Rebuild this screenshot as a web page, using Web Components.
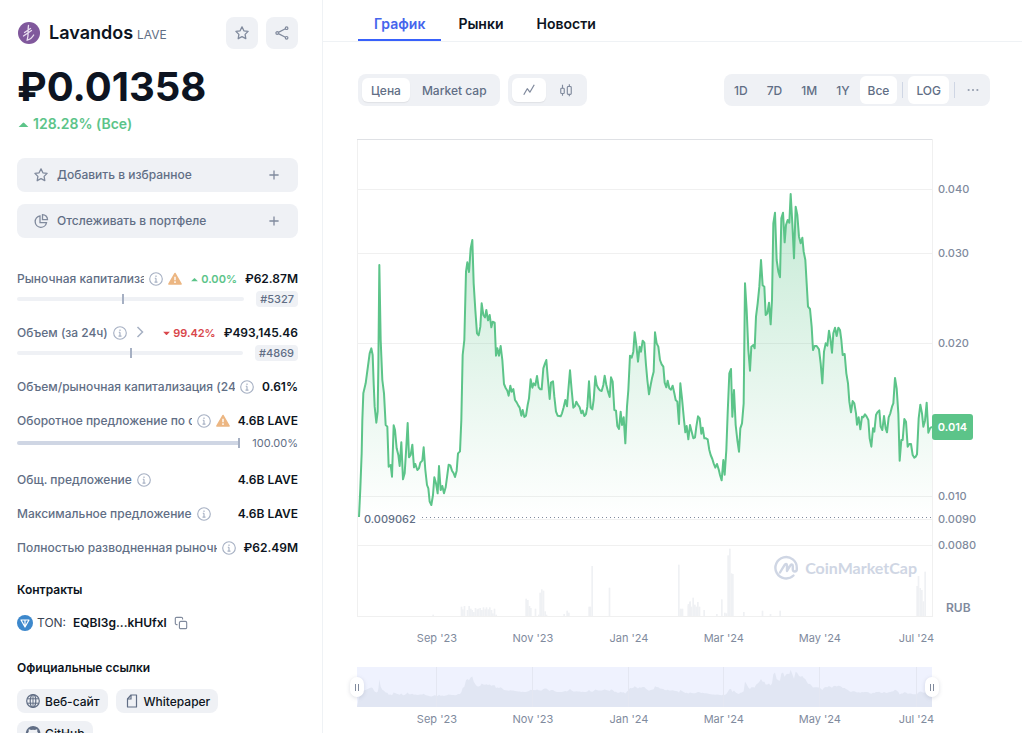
<!DOCTYPE html>
<html lang="ru">
<head>
<meta charset="utf-8">
<title>Lavandos LAVE</title>
<style>
html, body { margin: 0; height: 100%; }
body {
  font-family: Inter, "Liberation Sans", sans-serif;
  color: #0d1421;
  background: #fff;
  --muted: #616e85;
  --faint: #a6b0c3;
  --soft: #eff2f5;
  --fill: #eff1f5;
  --green: #5cc489;
  --red: #d9474b;
}
</style>
</head>
<body>
<coin-page>
  <coin-sidebar slot="side">
    <coin-header slot="top" name="Lavandos" symbol="LAVE" price="₽0.01358" change="128.28% (Все)"></coin-header>
    <action-button slot="actions" icon="star">Добавить в избранное</action-button>
    <action-button slot="actions" icon="pie">Отслеживать в портфеле</action-button>

    <stat-row slot="stats" label="Рыночная капитализация" warn delta="0.00%" dir="up" value="₽62.87M" rank="#5327" at="46"></stat-row>
    <stat-row slot="stats" label="Объем (за 24ч)" more delta="99.42%" dir="down" value="₽493,145.46" rank="#4869" at="50"></stat-row>
    <stat-row slot="stats" label="Объем/рыночная капитализация (24ч)" value="0.61%"></stat-row>
    <stat-row slot="stats" label="Оборотное предложение по словам проекта" warn value="4.6B LAVE" share="100.00%" at="99"></stat-row>
    <stat-row slot="stats" label="Общ. предложение" value="4.6B LAVE"></stat-row>
    <stat-row slot="stats" label="Максимальное предложение" value="4.6B LAVE"></stat-row>
    <stat-row slot="stats" label="Полностью разводненная рыночная капитализация" value="₽62.49M"></stat-row>

    <contract-line slot="contracts" chain="TON:" address="EQBI3g...kHUfxl"></contract-line>
    <link-chip slot="links" icon="globe" href="#site">Веб-сайт</link-chip>
    <link-chip slot="links" icon="doc" href="#paper">Whitepaper</link-chip>
    <link-chip slot="links" icon="github" href="#github">GitHub</link-chip>
  </coin-sidebar>
  <page-tabs slot="main"></page-tabs>
  <chart-toolbar slot="main"></chart-toolbar>
  <price-chart slot="main"></price-chart>
  <range-brush slot="main"></range-brush>
</coin-page>

<script>
const ICONS = {
  star: '<path d="M8 1.9l1.9 3.9 4.2.6-3 3 .7 4.3L8 11.7l-3.800 2 .7-4.300-3-3 4.200-.6z" stroke-linejoin="round"/>',
  share: '<circle cx="3.200" cy="8" r="1.300"/><circle cx="12.600" cy="3.200" r="1.300"/><circle cx="12.600" cy="12.800" r="1.300"/><path d="M4.400 7.400l7-3.600M4.400 8.600l7 3.600"/>',
  pie: '<path d="M7 3a5.700 5.700 0 1 0 6.500 6.600H7z"/><path d="M9.500 1.600v5h5a5 5 0 0 0-5-5z"/>',
  plus: '<path d="M8 3.400v9.200M3.400 8h9.200"/>',
  info: '<circle cx="8" cy="8" r="7.200"/><path d="M8 7v4.500M8 4v1.800M6.600 7.200H8M6.300 11.500h3.400"/>',
  warn: '<path d="M8 1.800L14.800 13.600H1.200z" fill="#ecb682" stroke="#ecb682" stroke-width="2" stroke-linejoin="round"/><path d="M8 5.500v4M8 10.700v1.800" stroke="#fff" stroke-width="1.600"/>',
  chevron: '<path d="M5.500 2l5 5-5 5"/>',
  copy: '<rect x="6.200" y="6.200" width="8.300" height="8.300" rx="1.500"/><path d="M4 9.800H3a1.500 1.500 0 0 1-1.500-1.500V3A1.500 1.500 0 0 1 3 1.500h5.300A1.500 1.500 0 0 1 9.800 3v1"/>',
  globe: '<circle cx="8" cy="8" r="6.300"/><ellipse cx="8" cy="8" rx="2.800" ry="6.300"/><path d="M8 1.700v12.600M2.200 5.800h11.600M2.200 10.200h11.600" stroke-width="1"/>',
  doc: '<path d="M7 2h5.500v12h-9V6z" stroke-linejoin="round"/><path d="M7 2v4H3.500"/>',
  github: '<path fill="currentColor" stroke="none" d="M8 .9a7.200 7.200 0 0 0-2.300 14v-2.300c-2 .4-2.400-.8-2.400-.8-.4-1-1-1.200-1-1.200 1.200.1 1.600 1 1.600 1 .7 1.100 1.700.8 2.100.6-1.900-.3-3-1.200-3-3.700 0-.9.300-1.600.8-2.100-.2-.8-.2-1.500.1-2.200.7 0 1.400.3 2.100.9a7 7 0 0 1 4 0c.7-.6 1.400-.9 2.100-.9.300.7.300 1.400.1 2.200.5.500.8 1.200.8 2.100 0 2.500-1.100 3.400-3 3.700.3.300.5.800.5 1.500v1.200A7.200 7.200 0 0 0 8 .9z"/>',
  line: '<path d="M2 13.500L6 6.500l3 4 5-8.500" stroke-linejoin="round"/>',
  candle: '<rect x="2" y="6" width="4" height="6" rx="1"/><path d="M4 2v4M4 12v2.500"/><rect x="9.500" y="4" width="4.500" height="9" rx="1"/><path d="M11.800 1.500V4M11.800 13v2"/>',
  dots: '<path d="M2 8h2M7 8h2M12 8h2" stroke-width="1.800"/>',
  up: '<path fill="currentColor" stroke="none" d="M2 11l5-5q1-1 2 0l5 5z"/>',
  down: '<path fill="currentColor" stroke="none" d="M2 5l5 5q1 1 2 0l5-5z"/>'
};
const icon = (name, size = 16, w = 1.4) =>
  `<svg class="i" width="${size}" height="${size}" viewBox="0 0 16 16" fill="none" stroke="currentColor" stroke-width="${w}" aria-hidden="true">${ICONS[name]}</svg>`;

const BASE = `
  *{box-sizing:border-box}
  .i{display:block;flex:none}
  button{font:inherit;color:inherit;border:0;background:none;padding:0;margin:0;cursor:pointer}
  a{color:inherit;text-decoration:none}
  h1,h2,p{margin:0}
`;
function define(name, css, html) {
  customElements.define(name, class extends HTMLElement {
    constructor() { super(); this.attachShadow({ mode: 'open' }); }
    connectedCallback() {
      this.shadowRoot.innerHTML = `<style>${BASE}${css}</style>` + html(this);
    }
  });
}
const attr = (el, n) => el.getAttribute(n) || '';

define('coin-page', `
  :host{display:flex;height:100vh;overflow:hidden}
  aside{flex:0 0 323px;border-right:1px solid var(--soft);overflow-y:auto;scrollbar-width:none}
  main{flex:1;min-width:0;overflow-y:auto;scrollbar-width:none}
`, () => `<aside><slot name="side"></slot></aside><main><slot name="main"></slot></main>`);

define('coin-sidebar', `
  :host{display:block;padding:17px 24px 24px 17px}
  .actions{display:grid;gap:12px;margin-top:24px}
  .stats{display:block;margin-top:32px}
  h2{font-size:12px;line-height:18px;font-weight:600}
  .contracts{margin-top:24px}
  .links{margin-top:27px}
  .chips{display:flex;flex-wrap:wrap;gap:8px;margin-top:12px}
`, () => `
  <slot name="top"></slot>
  <div class="actions"><slot name="actions"></slot></div>
  <div class="stats"><slot name="stats"></slot></div>
  <section class="contracts"><h2>Контракты</h2><slot name="contracts"></slot></section>
  <section class="links"><h2>Официальные ссылки</h2><div class="chips"><slot name="links"></slot></div></section>`);

define('coin-header', `
  :host{display:block}
  .top{display:flex;align-items:center;height:32px}
  .logo{width:24px;height:24px;margin-right:8px;flex:none}
  h1{font-size:18px;line-height:24px;font-weight:600;display:flex;align-items:baseline;gap:4px;flex:1;padding-top:2px}
  h1 span{font-size:12px;font-weight:400;color:var(--muted)}
  .top button{width:32px;height:32px;border-radius:8px;background:var(--fill);color:#808a9d;display:grid;place-items:center;margin-left:8px}
  .price{font-size:40px;line-height:48px;font-weight:700;margin-top:14px}
  .change{display:flex;align-items:center;gap:3px;height:20px;margin-top:3px;font-size:14px;line-height:20px;font-weight:600;color:var(--green)}
`, el => `
  <div class="top">
    <svg class="logo" viewBox="0 0 24 24" aria-hidden="true"><circle cx="12" cy="12" r="11" fill="#80589c"/><path d="M11.500 4.500c-1 5 .5 9-1.300 14.500 3-.5 5-2.500 6.500-5M7.500 11.500l6-4M6.500 15l8-5.500" fill="none" stroke="#eadff0" stroke-width="1.300" stroke-linecap="round"/></svg>
    <h1>${attr(el, 'name')}<span>${attr(el, 'symbol')}</span></h1>
    <button aria-label="В избранное">${icon('star', 16, 1.3)}</button>
    <button aria-label="Поделиться">${icon('share', 16, 1.2)}</button>
  </div>
  <p class="price">${attr(el, 'price')}</p>
  <p class="change">${icon('up', 13)}<span>${attr(el, 'change')}</span></p>`);

define('action-button', `
  :host{display:block}
  button{display:flex;align-items:center;gap:8px;width:100%;height:34px;padding:0 16px;border-radius:8px;background:var(--fill);color:var(--muted);font-size:12px;line-height:18px;font-weight:500}
  span{flex:1;text-align:left}
  .i{color:#808a9d}
`, el => `<button>${icon(attr(el, 'icon'), 16, 1.3)}<span><slot></slot></span>${icon('plus', 16, 1.3)}</button>`);

define('stat-row', `
  :host{display:block;margin-bottom:16px}
  .row{display:flex;align-items:center;height:18px;font-size:12px;line-height:18px}
  .label{overflow:hidden;white-space:nowrap;color:var(--muted);font-weight:500;flex:0 1 auto}
  .row .i{margin-left:5px}
  .info{color:var(--faint)} .more{color:var(--faint)}
  .end{display:flex;align-items:center;margin-left:auto;padding-left:8px;white-space:nowrap;font-weight:600}
  .delta{display:flex;align-items:center;gap:2px;font-size:11px;margin-right:8px}
  .delta.up{color:var(--green)} .delta.down{color:var(--red)}
  .row .delta .i{margin:0}
  .bar{display:flex;align-items:center;justify-content:space-between;gap:12px;height:18px;margin-top:2px;font-size:11px;line-height:16px;color:var(--muted)}
  .bar.share{height:20px;margin:3px 0 18px}
  .track{position:relative;flex:1;height:4px;border-radius:2px;background:var(--fill)}
  .share .track{background:#cfd6e4}
  .mark{position:absolute;top:-3px;width:2px;height:10px;background:#a6b0c3}
  .rank{padding:0 4px;border-radius:4px;background:var(--fill);font-weight:500}
`, el => {
  const d = attr(el, 'dir'), has = n => el.hasAttribute(n);
  const tail = has('rank') ? `<span class="rank">${attr(el, 'rank')}</span>` : `<span>${attr(el, 'share')}</span>`;
  return `<div class="row"><span class="label">${attr(el, 'label')}</span>
    <span class="info">${icon('info', 14, 1.3)}</span>${has('warn') ? icon('warn', 14) : ''}${has('more') ? `<span class="more">${icon('chevron', 16, 1.5)}</span>` : ''}
    <span class="end">${has('delta') ? `<span class="delta ${d}">${icon(d, 9)}${attr(el, 'delta')}</span>` : ''}<span>${attr(el, 'value')}</span></span></div>` +
    (has('at') ? `<div class="bar${has('share') ? ' share' : ''}"><div class="track"><i class="mark" style="left:${attr(el, 'at')}%"></i></div>${tail}</div>` : '');
});

define('contract-line', `
  :host{display:flex;align-items:center;margin-top:15px;height:18px;font-size:12px;line-height:18px}
  .coin{width:16px;height:16px;margin-right:4px}
  span{color:#3a4354}
  a{font-weight:600;margin:0 7px}
  button{color:#808a9d}
`, el => `
  <svg class="coin" viewBox="0 0 16 16" aria-hidden="true"><circle cx="8" cy="8" r="8" fill="#3d88cc"/><path d="M4 5h8L8 12zM8 5v7" fill="none" stroke="#fff" stroke-width="1.200" stroke-linejoin="round"/></svg>
  <span>${attr(el, 'chain')}</span><a href="#contract">${attr(el, 'address')}</a>
  <button aria-label="Копировать">${icon('copy', 14, 1.3)}</button>`);

define('link-chip', `
  :host{display:block}
  a{display:flex;align-items:center;gap:4px;height:24px;padding:0 8px;border-radius:8px;background:var(--fill);font-size:12px;font-weight:500}
  .i{color:var(--muted)}
`, el => `<a href="${attr(el, 'href')}">${icon(attr(el, 'icon'), 16, 1.2)}<slot></slot></a>`);

define('page-tabs', `
  :host{display:block;border-bottom:1px solid var(--soft)}
  nav{display:flex;gap:1px;height:41px;padding-left:35px}
  a{padding:0 16px;line-height:48px;font-size:14px;font-weight:600}
  a[aria-current]{color:#4565ec;border-bottom:2px solid #3861fb}
`, () => `<nav><a href="#chart" aria-current="page">График</a><a href="#markets">Рынки</a><a href="#news">Новости</a></nav>`);

define('chart-toolbar', `
  :host{display:flex;gap:8px;margin:32px 32px 0 35px;font-size:12px;font-weight:500;color:var(--muted)}
  .group{display:flex;align-items:center;height:32px;padding:0 4px;border-radius:8px;background:var(--fill)}
  button{height:24px;padding:0 9px;border-radius:6px}
  .wide{padding:0 9px 0 12px}
  .views{gap:3px}
  .pic{width:34px;padding:0;display:grid;place-items:center;color:#808a9d}
  .on{background:#fff;box-shadow:0 1px 1px #80808022}
  .tall{height:28px;box-shadow:none;padding:0 8px}
  .ranges{margin-left:auto;gap:1px;padding:0 4px 0 1px}
  .ranges .pic{width:26px}
  i{width:1px;height:16px;background:#cfd6e4;margin:0 4px}
`, () => `
  <div class="group"><button class="on">Цена</button><button class="wide">Market cap</button></div>
  <div class="group views"><button class="pic on" aria-label="Линия">${icon('line', 14, 1.4)}</button><button class="pic" aria-label="Свечи">${icon('candle', 14, 1.3)}</button></div>
  <div class="group ranges"><button>1D</button><button>7D</button><button>1M</button><button>1Y</button><button class="on tall">Все</button><i></i><button class="on tall">LOG</button><i></i><button class="pic" aria-label="Ещё">${icon('dots', 14)}</button></div>`);

/* Series in thirds of a pixel on a 1725 × 1434 canvas; each part carries its own origin. */
const W = 1725, H = 1434;
const PARTS = [
  [-21, 303, `27,831 31,745 35,640 37,540 40,460 47,430 53,385 59,340 64,325 68,345 71,430 74,500 79,548 83,515 85,380 88,75 92,300 97,420 102,460 107,555 112,560 116,680 122,675 126,710 131,556 135,570 140,625 145,645 149,678 154,607 159,718 164,700 169,620 173,549 177,652 182,645 187,614 192,682 196,672 202,690 207,685 211,668 217,662 221,622 226,690 231,735 235,745 239,785 244,795 249,765 253,712 258,730 263,760 267,678 272,750 277,738 282,760 287,742 291,712 296,674 301,676 306,692 311,700 315,711 320,692 324,640 330,634 334,540 338,345 343,300 348,95 352,67 357,96 362,25 367,0 371,130 376,210 381,280 386,286 391,260 395,190 400,225 405,232 409,210 414,241 419,225 424,262 428,245 434,248 438,347 442,325 447,347 452,318 457,360 462,432 467,444 472,452 476,467 481,437 485,455 490,447 495,480 500,487 505,497 509,503 514,527 518,510 523,531 528,527 533,495 537,475 542,418 547,443 551,430 556,436 561,408 566,442 571,448 575,448 580,385 585,370`],
  [549, 513, `19,150 23,200 29,267 33,218 39,214 43,260 48,305 53,317 62,319 66,310 71,292 76,270 81,289 85,240 90,181 95,240 100,293 105,288 109,275 114,284 119,292 124,310 128,302 133,318 138,312 142,290 147,214 152,293 157,298 161,270 166,199 170,225 175,235 180,241 185,243 190,225 194,197 199,225 204,245 209,261 213,202 218,215 223,300 228,302 232,348 237,357 242,305 246,345 251,322 256,400 261,290 265,240 270,137 275,143 280,125 284,67 289,105 294,155 299,110 303,125 308,92 313,98 318,165 322,210 327,253 332,225 336,205 341,185 345,67 350,100 355,110 360,150 365,163 370,170 374,218 379,232 383,212 388,235 393,239 398,227 403,250 407,270 412,275 417,342 421,220 426,265 432,330 436,367 440,348 445,388 450,345 455,365 460,385 465,382 469,350 474,319 479,325 484,371 488,353 493,385 498,385 503,388 508,420 512,435 517,447 521,460 526,473 531,462 536,478 540,495 545,511 550,450 554,494 559,420 563,310 568,190 573,177 577,320 582,240 587,345 592,390 597,425`],
  [1089, 123, `61,745 66,730 71,670 75,310 80,390 85,510 90,572 94,500 100,495 104,505 108,410 113,370 118,320 123,240 128,316 133,320 137,405 142,400 147,368 152,433 156,360 160,130 165,98 170,240 175,275 180,292 184,115 189,98 194,187 198,135 203,120 208,128 212,42 217,130 222,235 227,80 232,105 237,170 242,190 247,173 251,215 256,240 260,310 264,380 270,387 275,440 279,510 284,498 290,498 297,508 302,550 307,610 312,515 317,490 322,497 327,452 331,475 336,518 340,460 345,443 350,468 355,443 360,450 364,480 368,525 374,522 379,580 384,610 388,665 393,697 398,663 403,670 408,700 411,734 416,712 421,748 426,710 430,712 435,703 440,710 445,720 449,775 454,800 459,745 463,755 468,705 472,697 478,691 482,740 487,750 492,708 497,745 501,757 506,712 511,700 516,680 520,670 525,594 530,625 535,700 539,842 544,780 548,780 553,717 558,725 563,800 568,792 573,792 578,825 583,833 587,830 591,823 596,715 601,674 606,700 610,740 615,722 620,668 625,758 630,745 636,740`]
];
const POINTS = PARTS.flatMap(([dx, dy, s]) => s.split(' ').map(p => {
  const [x, y] = p.split(',').map(Number);
  return [x + dx, y + dy];
}));
const VOLUME = [
  [-21, '249:4 334:28 338:20 343:30 352:18 357:30 362:22 366:18 371:12 376:24 381:20 385:22 390:24 395:18 400:26 405:20 409:26 414:20 419:26 424:18 428:8 433:22 438:4 528:52 533:48 538:30 542:24 556:22 566:4 570:70 575:80 580:76 585:14 589:4 642:6 651:16 656:10 717:28 721:28 726:150 778:85 986:154 991:20 996:20 1015:32 1019:42'],
  [969, '2:22 7:22 25:36 30:44 34:28 39:55 44:34 48:28 53:42 58:28 72:18 110:6 125:50 134:10 139:8 144:182 149:202 154:128 158:126 191:12 247:16 271:6 300:16 711:90 715:120 720:84 725:78 730:44 735:133']
].flatMap(([dx, s]) => s.split(' ').map(p => {
  const [x, h] = p.split(':').map(Number);
  return `<rect x="${x + dx - 2}" y="${H - 3 - h}" width="5" height="${h}"/>`;
})).join('');

const MONTHS = [["Sep '23", 13.9], ["Nov '23", 30.6], ["Jan '24", 47.3], ["Mar '24", 63.8], ["May '24", 80.5], ["Jul '24", 97.3]];
const monthLabels = y => MONTHS.map(([t, x]) => `<text x="${x}%" y="${y}" text-anchor="middle">${t}</text>`).join('');
const GRID = [[50, '0.040'], [114, '0.030'], [204, '0.020'], [357, '0.010'], [380, '0.0090'], [406, '0.0080']];

define('price-chart', `
  :host{display:grid;grid-template-columns:1fr 58px;margin:33px 32px 0 34px}
  svg{display:block;width:100%;overflow:visible}
  text{font-size:11px;fill:#808a9d;font-weight:500}
  .plot{position:relative;height:478px}
  .plot>svg{height:478px}
  .months{height:40px}
  .months text{font-weight:400}
  .tag{position:absolute;left:100%;top:275px;width:41px;height:26px;border-radius:3px;background:var(--green);color:#fff;font-size:11px;line-height:26px;font-weight:600;text-align:center}
  .brand{position:absolute;right:15px;bottom:36px;display:flex;align-items:center;gap:7px;color:#cfd6e4;font:700 16px/26px Lato,sans-serif}
  .brand svg{width:24px;height:24px}
`, () => {
  const line = POINTS.map(p => p.join(' ')).join('L');
  return `
  <div class="plot">
    <svg>
      <defs><linearGradient id="g" x1="0" y1="0" x2="0" y2="1"><stop offset="0" stop-color="#5cc489" stop-opacity=".36"/><stop offset="1" stop-color="#5cc489" stop-opacity="0"/></linearGradient></defs>
      <g stroke="#f0f0f0" shape-rendering="crispEdges">
        ${GRID.map(([y]) => `<line x1="${y === 380 ? 63 : 0}" x2="100%" y1="${y}" y2="${y}"/>`).join('')}
        <line x1="0" x2="100%" y1="477" y2="477"/><line x1="0" x2="0" y1="0" y2="478"/><line x1="100%" x2="100%" y1="0" y2="478"/>
        <line x1="0" x2="100%" y1="0" y2="0" stroke="#dfe1e5"/>
      </g>
      <svg width="100%" height="478" viewBox="0 0 ${W} ${H}" preserveAspectRatio="none">
        <g fill="#eff1f4">${VOLUME}</g>
        <path d="M6 1134L${line}V1134z" fill="url(#g)"/>
        <path d="M${line}" fill="none" stroke="#5cc489" stroke-width="2" stroke-linejoin="round" vector-effect="non-scaling-stroke"/>
      </svg>
      <line x1="65" x2="100%" y1="378" y2="378" stroke="#808a9d" stroke-dasharray="1 3" shape-rendering="crispEdges"/>
      <text x="7" y="384" style="fill:#616e85">0.009062</text>
    </svg>
    <div class="brand"><svg viewBox="0 0 24 24" fill="none" stroke="currentColor" stroke-width="2.400" stroke-linecap="round" stroke-linejoin="round" aria-hidden="true"><path d="M19.500 19.500A10.700 10.700 0 1 1 22.800 12v1.300c0 3-4 3-4 0V10c0-2-1.800-2-2.600-.4L13 15V9.500c0-2-1.500-2-2.500-.4L6 16.500"/></svg><span>CoinMarketCap</span></div>
    <span class="tag">0.014</span>
  </div>
  <svg height="478">${GRID.map(([y, t]) => `<text x="6" y="${y + 4}">${t}</text>`).join('')}<text x="14" y="473" style="font-size:12px;font-weight:600">RUB</text></svg>
  <svg class="months">${monthLabels(25)}</svg>`;
});

define('range-brush', `
  :host{display:block;margin:10px 90px 0 34px}
  .track{position:relative;height:40px}
  svg{display:block;width:100%;overflow:visible}
  .track svg{height:40px;background:#eff2fe}
  text{font-size:11px;fill:#808a9d}
  button{position:absolute;top:10px;width:14px;height:20px;border-radius:7px;background:#fff;box-shadow:0 1px 4px #58667e33;display:flex;justify-content:center;align-items:center;gap:2px}
  button i{width:1px;height:7px;background:#808a9d}
  .a{left:-7px}.b{right:-7px}
`, () => {
  const area = POINTS.map(([x, y]) => {
    const price = 0.04 * Math.pow(4, -(y / 3 - 50) / 307);
    return `${x} ${(38 - 900 * price).toFixed(1)}`;
  }).join('L');
  return `<div class="track">
    <svg><svg width="100%" height="40" viewBox="0 0 ${W} 40" preserveAspectRatio="none"><path d="M0 40L${area}V40z" fill="#e1e6f3"/></svg>
    <g stroke="#e4e7f2" shape-rendering="crispEdges">${MONTHS.map(([, x]) => `<line x1="${x}%" x2="${x}%" y1="0" y2="40"/>`).join('')}</g></svg>
    <button class="a" aria-label="Начало периода"><i></i><i></i></button><button class="b" aria-label="Конец периода"><i></i><i></i></button></div>
    <svg height="24">${monthLabels(16)}</svg>`;
});
</script>
</body>
</html>
